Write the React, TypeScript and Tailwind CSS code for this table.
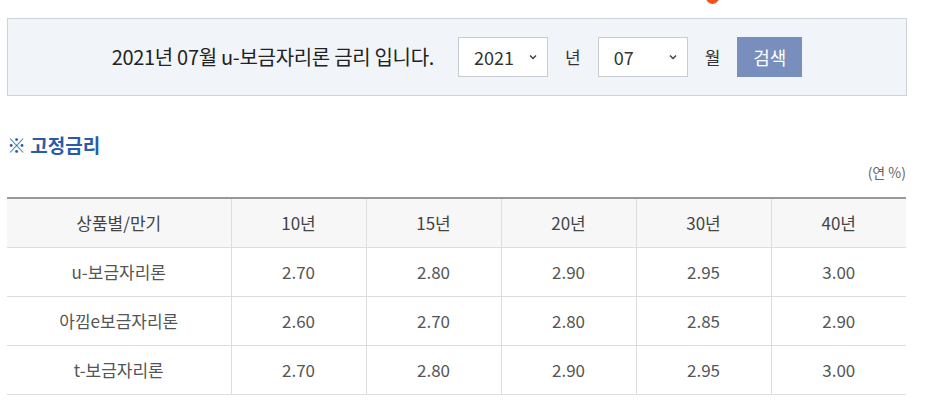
const YEARS = ['10년', '15년', '20년', '30년', '40년']

const ROWS = [
  { name: 'u-보금자리론', rates: ['2.70', '2.80', '2.90', '2.95', '3.00'] },
  { name: '아낌e보금자리론', rates: ['2.60', '2.70', '2.80', '2.85', '2.90'] },
  { name: 't-보금자리론', rates: ['2.70', '2.80', '2.90', '2.95', '3.00'] },
]

function Chevron() {
  return (
    <svg width="10" height="10" viewBox="0 0 10 10" className="absolute right-[9px] top-1/2 -translate-y-1/2">
      <path d="M2 3.5 L5 6.5 L8 3.5" fill="none" stroke="#444" strokeWidth="1.5" />
    </svg>
  )
}

function Select({ value }: { value: string }) {
  return (
    <div className="relative w-[90px] h-[40px] bg-white border border-[#c9cdd2] flex items-center pl-[15px] text-[18px] text-[#333]">
      {value}
      <Chevron />
    </div>
  )
}

export default function App() {
  return (
    <div
      className="relative w-[940px] h-[402px] bg-white overflow-hidden px-[7px] pt-[18px]"
      style={{ fontFamily: '"Noto Sans CJK KR", "Noto Sans", sans-serif' }}
    >
      <span className="absolute left-[706px] top-[-9px] w-[13px] h-[13px] rounded-full bg-[#f4511e]" />

      <div className="w-[900px] h-[78px] bg-[#f1f5f9] border border-[#cdd3d9] flex items-center justify-center">
        <p className="text-[20px] text-[#222] tracking-[-0.3px] mr-[24px]">2021년 07월 u-보금자리론 금리 입니다.</p>
        <Select value="2021" />
        <span className="text-[17px] text-[#333] mx-[17px]">년</span>
        <Select value="07" />
        <span className="text-[17px] text-[#333] mx-[17px]">월</span>
        <button className="w-[65px] h-[40px] bg-[#788fbe] text-white text-[18px]">검색</button>
      </div>

      <h2 className="mt-[36px] text-[19px] font-bold text-[#2a5ba8] leading-[26px]">※ 고정금리</h2>
      <p className="text-right w-[899px] text-[14px] text-[#666] mt-[4px] leading-[20px]">(연 %)</p>

      <table className="mt-[15px] w-[899px] border-collapse border-t-2 border-t-[#999] text-[17px] table-fixed">
        <colgroup>
          <col className="w-[224px]" />
          <col className="w-[135px]" />
          <col className="w-[135px]" />
          <col className="w-[135px]" />
          <col className="w-[135px]" />
          <col className="w-[135px]" />
        </colgroup>
        <thead>
          <tr className="h-[49px] bg-[#f7f7f7]">
            <th className="font-normal text-[#444] border-b border-[#ddd]">상품별/만기</th>
            {YEARS.map((y) => (
              <th key={y} className="font-normal text-[#444] border-b border-l border-[#ddd]">{y}</th>
            ))}
          </tr>
        </thead>
        <tbody>
          {ROWS.map((r) => (
            <tr key={r.name} className="h-[49px]">
              <td className="text-center text-[#555] border-b border-[#ddd]">{r.name}</td>
              {r.rates.map((v, i) => (
                <td key={i} className="text-center text-[#555] border-b border-l border-[#ddd]">{v}</td>
              ))}
            </tr>
          ))}
        </tbody>
      </table>
    </div>
  )
}
